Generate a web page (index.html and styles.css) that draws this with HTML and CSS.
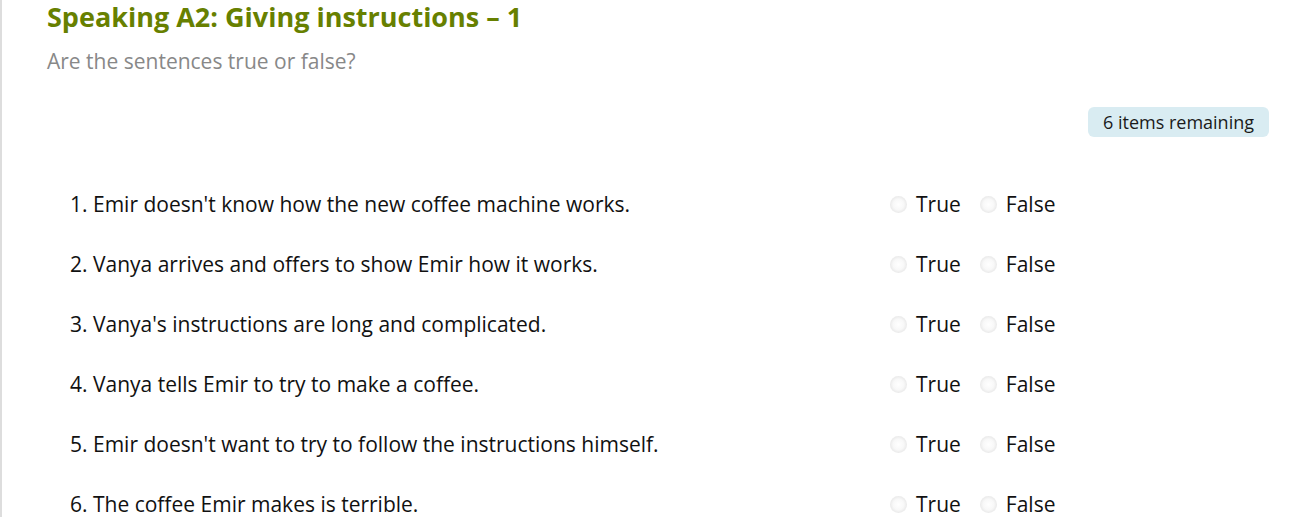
FILE: index.html
```html
<!DOCTYPE html>
<html>
<head>
<meta charset="utf-8">
<link rel="stylesheet" href="styles.css">
</head>
<body>
<div class="page">
  <h1 class="title">Speaking A2: Giving instructions – 1</h1>
  <p class="subtitle">Are the sentences true or false?</p>
  <div class="status"><span class="badge">6 items remaining</span></div>
  <ol class="items">
    <li class="item"><span class="q">1. Emir doesn't know how the new coffee machine works.</span><span class="opts"><label class="opt"><span class="radio"></span>True</label><label class="opt"><span class="radio"></span>False</label></span></li>
    <li class="item"><span class="q">2. Vanya arrives and offers to show Emir how it works.</span><span class="opts"><label class="opt"><span class="radio"></span>True</label><label class="opt"><span class="radio"></span>False</label></span></li>
    <li class="item"><span class="q">3. Vanya's instructions are long and complicated.</span><span class="opts"><label class="opt"><span class="radio"></span>True</label><label class="opt"><span class="radio"></span>False</label></span></li>
    <li class="item"><span class="q">4. Vanya tells Emir to try to make a coffee.</span><span class="opts"><label class="opt"><span class="radio"></span>True</label><label class="opt"><span class="radio"></span>False</label></span></li>
    <li class="item"><span class="q">5. Emir doesn't want to try to follow the instructions himself.</span><span class="opts"><label class="opt"><span class="radio"></span>True</label><label class="opt"><span class="radio"></span>False</label></span></li>
    <li class="item"><span class="q">6. The coffee Emir makes is terrible.</span><span class="opts"><label class="opt"><span class="radio"></span>True</label><label class="opt"><span class="radio"></span>False</label></span></li>
  </ol>
</div>
</body>
</html>
```
FILE: styles.css
```css
html, body {
  margin: 0;
  padding: 0;
  background: #fff;
}
body {
  font-family: "Open Sans", "Liberation Sans", sans-serif;
  color: #222;
  overflow: hidden;
}
.page {
  border-left: 2px solid #dddddd;
  min-height: 517px;
  padding: 0 44px 0 45px;
}
.title {
  margin: 0;
  font-size: 27px;
  line-height: 34px;
  font-weight: 700;
  color: #678000;
}
.subtitle {
  margin: 13px 0 0;
  font-size: 21px;
  line-height: 28px;
  color: #888888;
}
.status {
  display: flex;
  justify-content: flex-end;
  margin-top: 32px;
}
.badge {
  display: inline-block;
  background: #d9ecf2;
  color: #1a1a1a;
  font-size: 18px;
  line-height: 30px;
  padding: 0 15px;
  border-radius: 6px;
}
.items {
  list-style: none;
  margin: 37px 0 0;
  padding: 0 0 0 23px;
}
.item {
  display: flex;
  align-items: center;
  height: 60px;
  font-size: 21px;
  color: #111;
}
.q {
  width: 821px;
}
.opts {
  display: flex;
  gap: 20px;
}
.opt {
  display: flex;
  align-items: center;
  gap: 9px;
}
.radio {
  width: 17px;
  height: 17px;
  border-radius: 50%;
  background: radial-gradient(circle at 50% 50%, #ffffff 0%, #f8f8f8 45%, #e4e4e4 80%, #d6d6d6 100%);
  margin-left: -1px;
}
```
